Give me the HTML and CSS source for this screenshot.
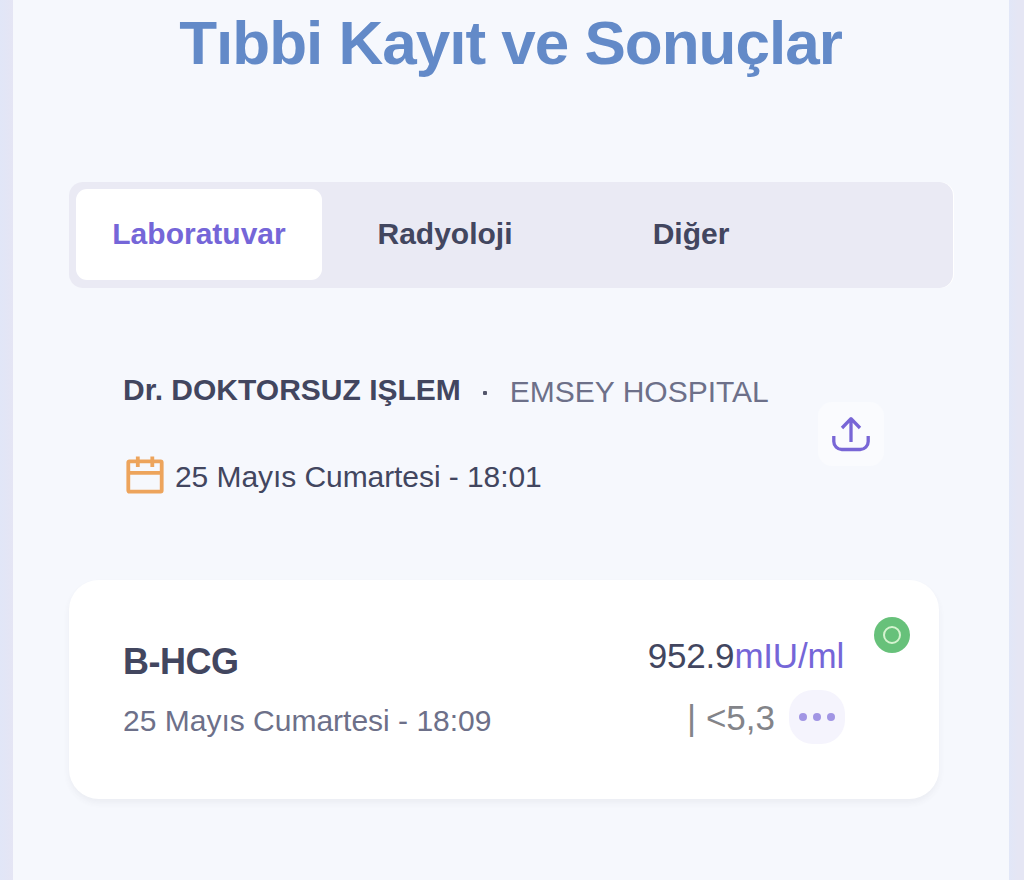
FILE: index.html
```html
<!DOCTYPE html>
<html lang="tr">
<head>
    <meta charset="UTF-8">
    <meta name="viewport" content="width=device-width, initial-scale=1.0">
    <title>Tıbbi Kayıt ve Sonuçlar</title>
    <link rel="stylesheet" href="styles.css">
</head>
<body>
    <main class="page">
        <h1>Tıbbi Kayıt ve Sonuçlar</h1>

        <nav class="tabs">
            <button class="tab active">Laboratuvar</button>
            <button class="tab">Radyoloji</button>
            <button class="tab">Diğer</button>
        </nav>

        <section class="visit">
            <div class="visit-info">
                <div class="visit-title">
                    <span class="doctor">Dr. DOKTORSUZ IŞLEM</span>
                    <span class="separator"></span>
                    <span class="hospital">EMSEY HOSPITAL</span>
                </div>
                <div class="visit-date">
                    <svg class="calendar-icon" viewBox="0 0 38 38" fill="none" stroke="#eda45c" stroke-width="3.8">
                        <rect x="2.3" y="5.3" width="33.4" height="30.3" rx="1"/>
                        <path d="M2 16.8h34M11.8 0.5v10.500M26.3 0.5v10.500"/>
                    </svg>
                    <span>25 Mayıs Cumartesi - 18:01</span>
                </div>
            </div>
            <button class="share" aria-label="Paylaş">
                <svg viewBox="0 0 40 36" fill="none" stroke="#7866d6" stroke-width="3.3" stroke-linejoin="round">
                    <path d="M20 26V3M11 12L20 2.7l9 9.300"/>
                    <path d="M2.800 20v5.500a8 8 0 0 0 8 8h18.400a8 8 0 0 0 8-8V20"/>
                </svg>
            </button>
        </section>

        <article class="result">
            <div class="result-info">
                <h2>B-HCG</h2>
                <p>25 Mayıs Cumartesi - 18:09</p>
            </div>
            <div class="result-values">
                <div class="value">952.9<span class="unit">mIU/ml</span></div>
                <div class="reference">
                    <span>| &lt;5,3</span>
                    <button class="more" aria-label="Detay">
                        <i></i><i></i><i></i>
                    </button>
                </div>
            </div>
            <span class="status"></span>
        </article>
    </main>
</body>
</html>
```

FILE: styles.css
```css
*, *::before {
    box-sizing: border-box;
}

body {
    margin: 0;
    height: 880px;
    overflow: hidden;
    background: linear-gradient(to right, #e1e6f7, #e5e5f4 14px, #e1e7f8 1008px, #e5e6f4 1018px);
    font-family: "Liberation Sans", Arial, sans-serif;
    font-size: 30px;
    color: #42465f;
}

button {
    border: none;
    padding: 0;
    font: inherit;
    color: inherit;
    cursor: pointer;
}

.page {
    height: 880px;
    margin: 0 15px 0 13px;
    padding: 8px 0 0 56px;
    background-color: #f6f8fd;
}

h1 {
    width: 883px;
    margin: 0 0 104px;
    text-align: center;
    font-size: 62px;
    line-height: 70px;
    letter-spacing: -1px;
    color: #638ac8;
}

.tabs {
    display: flex;
    width: 884px;
    height: 106px;
    padding: 7px 7px 8px;
    border-radius: 14px;
    background-color: #eaeaf4;
    box-shadow: 1px 0 0 #fff;
}

.tab {
    width: 246px;
    padding-bottom: 2px;
    border-radius: 11px;
    background: none;
    font-weight: bold;
}

.tab.active {
    background-color: #fff;
    color: #7566d8;
}

.visit {
    display: flex;
    justify-content: space-between;
    align-items: flex-start;
    width: 815px;
    margin-top: 82px;
    padding-left: 54px;
}

.visit-title {
    display: flex;
    align-items: baseline;
    line-height: 40px;
}

.doctor {
    font-weight: bold;
    letter-spacing: 0;
}

.separator {
    width: 4px;
    height: 4px;
    margin: 0 23px 0 22px;
    border-radius: 1px;
    background-color: #53566b;
    align-self: center;
    transform: translateY(3px);
}

.hospital {
    position: relative;
    top: 2px;
    color: #6d7089;
}

.visit-date {
    display: flex;
    align-items: center;
    gap: 11px;
    margin-top: 47px;
    padding-left: 3px;
    line-height: 40px;
    letter-spacing: -0.07px;
}

.calendar-icon {
    width: 38px;
    height: 38px;
    margin-top: -4px;
}

.share {
    display: flex;
    align-items: center;
    justify-content: center;
    width: 66px;
    height: 64px;
    margin-top: 32px;
    border-radius: 14px;
    background-color: #fafbfe;
}

.share svg {
    width: 40px;
    height: 36px;
}

.result {
    display: flex;
    width: 870px;
    height: 219px;
    margin-top: 83px;
    padding: 37px 29px 0 54px;
    border-radius: 30px;
    background-color: #fff;
    box-shadow: 0 4px 6px rgba(60, 60, 90, 0.06);
}

.result-info {
    flex: 1;
}

h2 {
    margin: 25px 0 19px;
    font-size: 36px;
    line-height: 40px;
    letter-spacing: -0.5px;
}

.result p {
    margin: 0;
    line-height: 40px;
    color: #6d7089;
}

.result-values {
    display: flex;
    flex-direction: column;
    align-items: flex-end;
    padding-top: 19px;
    font-size: 35px;
    line-height: 40px;
}

.value {
    padding-right: 1px;
    letter-spacing: -0.2px;
}

.unit {
    color: #7566d8;
}

.reference {
    display: flex;
    align-items: center;
    gap: 14px;
    margin-top: 14px;
    color: #838489;
}

.reference span {
    padding-top: 1px;
}

.more {
    display: flex;
    align-items: center;
    justify-content: center;
    gap: 6px;
    width: 56px;
    height: 54px;
    border-radius: 24px;
    background-color: #f5f4fd;
}

.more i {
    width: 8px;
    height: 8px;
    border-radius: 50%;
    background-color: #a195e4;
}

.status {
    display: flex;
    align-items: center;
    justify-content: center;
    width: 36px;
    height: 36px;
    margin-left: 29px;
    border-radius: 50%;
    background-color: #67c17a;
}

.status::before {
    content: "";
    width: 18px;
    height: 18px;
    border: 2px solid #d5f3cf;
    border-radius: 50%;
}
```
